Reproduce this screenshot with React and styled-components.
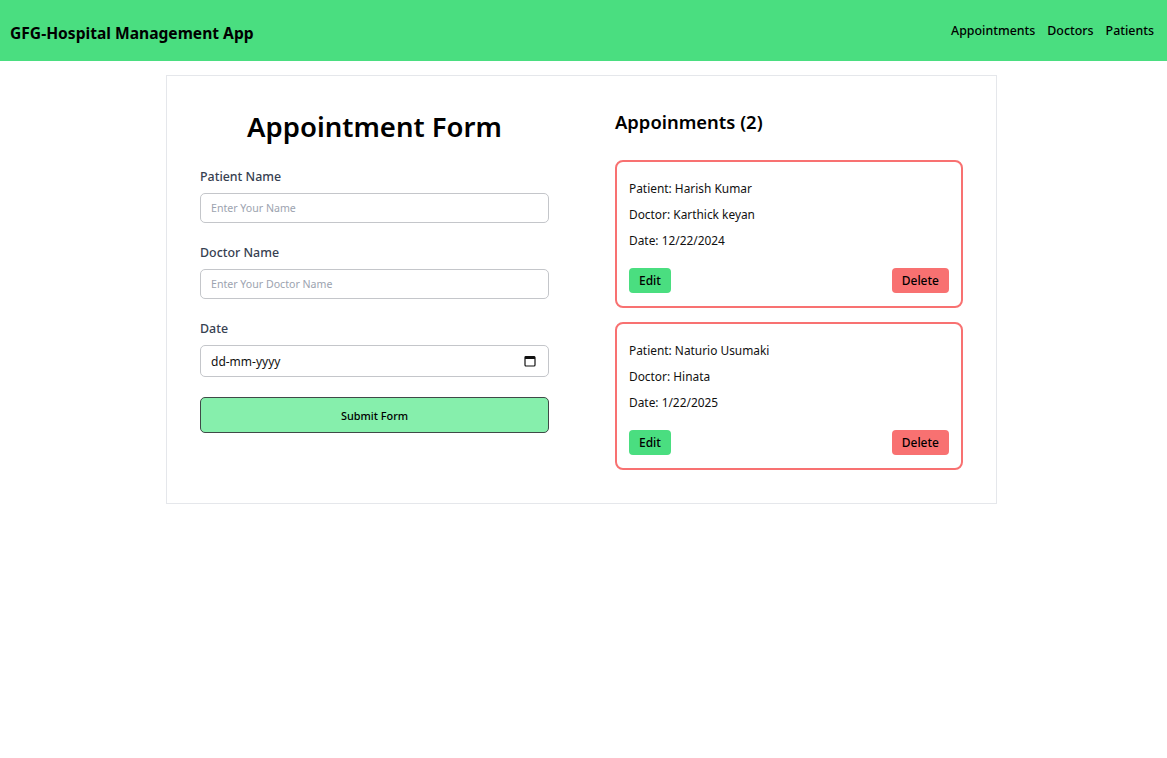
import React from "react";
import styled, { createGlobalStyle } from "styled-components";

const Global = createGlobalStyle`
  * { box-sizing: border-box; }
  body {
    margin: 0;
    font-family: "Noto Sans", "Open Sans", sans-serif;
    color: #000;
    background: #fff;
  }
`;

const Header = styled.header`
  height: 61px;
  background: #4ade80;
  display: flex;
  align-items: center;
  justify-content: space-between;
  padding: 0 13px 0 10px;
`;

const Brand = styled.h1`
  margin: 0;
  font-size: 15.6px;
  font-weight: 700;
  padding-top: 4px;
`;

const Nav = styled.nav`
  display: flex;
  gap: 12px;
`;

const NavLink = styled.a`
  font-size: 12.4px;
  font-weight: 500;
  color: #000;
  text-decoration: none;
`;

const Container = styled.main`
  width: 831px;
  margin: 14px 0 0 166px;
  border: 1px solid #e5e7eb;
  padding: 32px 33px 33px;
  display: grid;
  grid-template-columns: 349px 348px;
  column-gap: 66px;
  align-items: start;
`;

const FormCol = styled.form`
  display: flex;
  flex-direction: column;
`;

const FormTitle = styled.h2`
  margin: 1px 0 22px;
  font-size: 27.5px;
  line-height: 36px;
  font-weight: 600;
  text-align: center;
`;

const Field = styled.div`
  display: flex;
  flex-direction: column;
  margin-bottom: 20px;
`;

const Label = styled.label`
  font-size: 12.4px;
  line-height: 20px;
  font-weight: 500;
  color: #374151;
  margin-bottom: 6px;
`;

const Input = styled.input`
  height: 30px;
  border: 1px solid #c4c6ca;
  border-radius: 5px;
  padding: 0 10px;
  font-family: inherit;
  font-size: 10.6px;
  outline: none;
  &::placeholder { color: #9ca3af; }
`;

const DateBox = styled.div`
  height: 32px;
  border: 1px solid #c4c6ca;
  border-radius: 5px;
  padding: 0 12px 0 10px;
  display: flex;
  align-items: center;
  justify-content: space-between;
  font-size: 12px;
  color: #111;
`;

const SubmitButton = styled.button`
  height: 36px;
  background: #86efac;
  border: 1px solid #3f4a47;
  border-radius: 5px;
  font-family: inherit;
  font-size: 10.9px;
  font-weight: 500;
  color: #000;
  cursor: pointer;
`;

const ListCol = styled.section`
  display: flex;
  flex-direction: column;
  gap: 14px;
`;

const ListTitle = styled.h2`
  margin: 0 0 10px;
  font-size: 18.4px;
  line-height: 28px;
  font-weight: 600;
`;

const Card = styled.div`
  flex-shrink: 0;
  border: 2px solid #f87171;
  border-radius: 8px;
  padding: 16px 12px 13px;
  height: 148px;
  display: flex;
  flex-direction: column;
`;

const Line = styled.p`
  margin: 0 0 6px;
  font-size: 11.9px;
  line-height: 20px;
  color: #111;
`;

const Actions = styled.div`
  display: flex;
  justify-content: space-between;
  margin-top: auto;
`;

const ActionButton = styled.button`
  height: 25px;
  padding: 0 10px;
  border: none;
  border-radius: 4px;
  background: ${(p) => (p.$danger ? "#f87171" : "#4ade80")};
  font-family: inherit;
  font-size: 12px;
  font-weight: 500;
  color: #000;
  cursor: pointer;
`;

const CalendarIcon = () => (
  <svg width="12" height="12" viewBox="0 0 12 12" fill="none">
    <rect x="1" y="1.5" width="10" height="9.5" rx="1" stroke="#111" strokeWidth="1.2" />
    <rect x="1" y="1.5" width="10" height="2.5" fill="#111" />
  </svg>
);

const appointments = [
  { patient: "Harish Kumar", doctor: "Karthick keyan", date: "12/22/2024" },
  { patient: "Naturio Usumaki", doctor: "Hinata", date: "1/22/2025" },
];

export default function App() {
  return (
    <>
      <Global />
      <Header>
        <Brand>GFG-Hospital Management App</Brand>
        <Nav>
          <NavLink href="#">Appointments</NavLink>
          <NavLink href="#">Doctors</NavLink>
          <NavLink href="#">Patients</NavLink>
        </Nav>
      </Header>
      <Container>
        <FormCol onSubmit={(e) => e.preventDefault()}>
          <FormTitle>Appointment Form</FormTitle>
          <Field>
            <Label>Patient Name</Label>
            <Input placeholder="Enter Your Name" />
          </Field>
          <Field>
            <Label>Doctor Name</Label>
            <Input placeholder="Enter Your Doctor Name" />
          </Field>
          <Field>
            <Label>Date</Label>
            <DateBox>
              <span>dd-mm-yyyy</span>
              <CalendarIcon />
            </DateBox>
          </Field>
          <SubmitButton type="submit">Submit Form</SubmitButton>
        </FormCol>
        <ListCol>
          <ListTitle>Appoinments ({appointments.length})</ListTitle>
          {appointments.map((a) => (
            <Card key={a.patient}>
              <Line>Patient: {a.patient}</Line>
              <Line>Doctor: {a.doctor}</Line>
              <Line>Date: {a.date}</Line>
              <Actions>
                <ActionButton>Edit</ActionButton>
                <ActionButton $danger>Delete</ActionButton>
              </Actions>
            </Card>
          ))}
        </ListCol>
      </Container>
    </>
  );
}
